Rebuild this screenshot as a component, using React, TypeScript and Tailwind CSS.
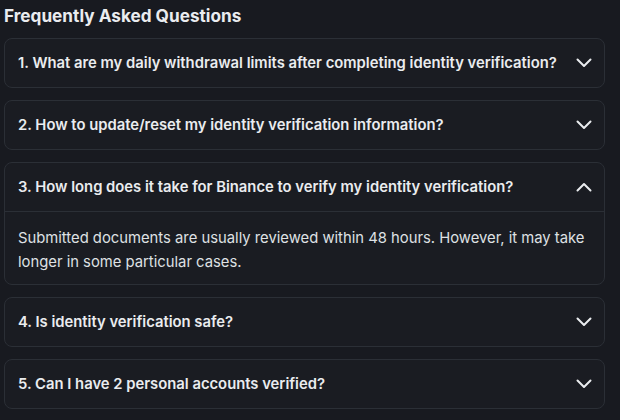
const faqs = [
  {
    q: "1. What are my daily withdrawal limits after completing identity verification?",
  },
  { q: "2. How to update/reset my identity verification information?" },
  {
    q: "3. How long does it take for Binance to verify my identity verification?",
    a: "Submitted documents are usually reviewed within 48 hours. However, it may take longer in some particular cases.",
  },
  { q: "4. Is identity verification safe?" },
  { q: "5. Can I have 2 personal accounts verified?" },
];

function Chevron({ up }: { up?: boolean }) {
  return (
    <svg width="16" height="10" viewBox="0 0 16 10" fill="none" className="shrink-0">
      <path
        d={up ? "M1.5 8.5L8 2L14.5 8.5" : "M1.5 1.5L8 8L14.5 1.5"}
        stroke="#eaecef"
        strokeWidth="2"
        strokeLinecap="round"
        strokeLinejoin="round"
      />
    </svg>
  );
}

export default function App() {
  return (
    <div
      className="w-[620px] h-[420px] overflow-hidden bg-[#181a20] text-[#eaecef] pl-[4px] pr-[15px]"
      style={{ fontFamily: "Inter, 'Noto Sans', sans-serif" }}
    >
      <h2 className="text-[17.2px] font-bold leading-[32px] mb-[6px]">Frequently Asked Questions</h2>

      <div className="flex flex-col gap-[12px]">
        {faqs.map((f) => (
          <div key={f.q} className="rounded-[8px] border border-[#2b2f36] bg-[#1a1c22]">
            <div className="flex items-center justify-between h-[48px] pl-[13px] pr-[12px]">
              <span className="text-[14.8px] font-semibold">{f.q}</span>
              <Chevron up={!!f.a} />
            </div>
            {f.a && (
              <div className="border-t border-[#2b2f36] px-[13px] pt-[14px] pb-[10px] text-[14.8px] leading-[24px] text-[#dfe1e4]">
                {f.a}
              </div>
            )}
          </div>
        ))}
      </div>
    </div>
  );
}
